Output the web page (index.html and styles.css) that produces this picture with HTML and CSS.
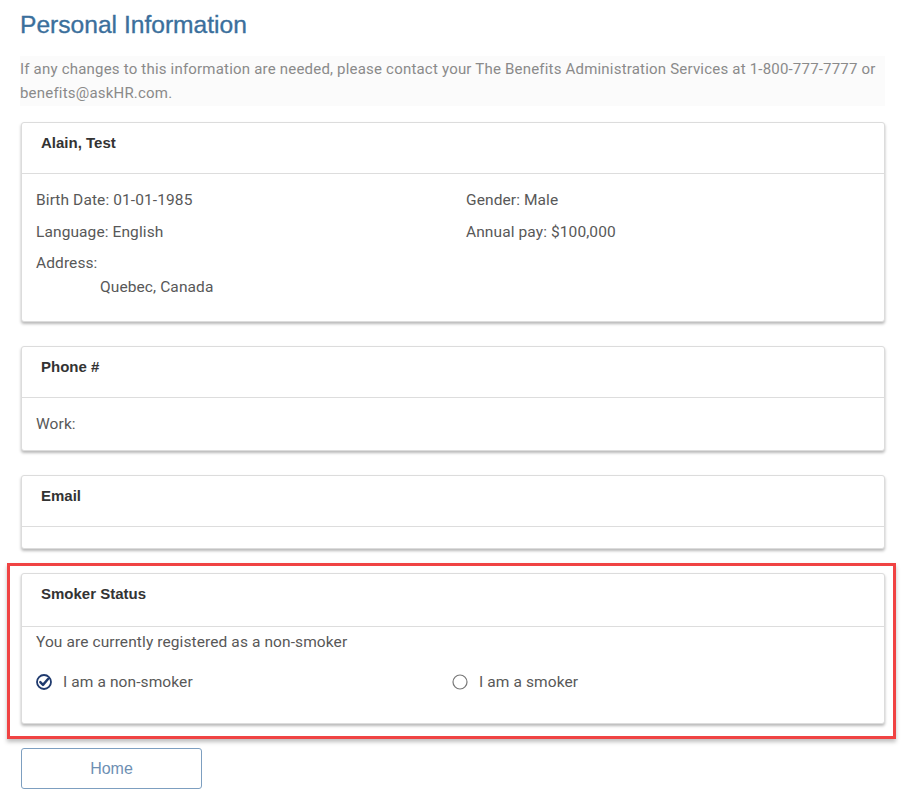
FILE: index.html
```html
<!DOCTYPE html>
<html lang="en">
<head>
<meta charset="utf-8">
<title>Personal Information</title>
<link rel="stylesheet" href="styles.css">
</head>
<body>
<main class="page">
  <h1 class="title">Personal Information</h1>
  <p class="intro">If any changes to this information are needed, please contact your The Benefits Administration Services at 1-800-777-7777 or benefits@askHR.com.</p>

  <section class="card">
    <div class="card-head">Alain, Test</div>
    <div class="card-body info-grid">
      <div class="col">
        <div class="row">Birth Date: 01-01-1985</div>
        <div class="row">Language: English</div>
        <div class="address">
          <div>Address:</div>
          <div class="addr-val">Quebec, Canada</div>
        </div>
      </div>
      <div class="col">
        <div class="row">Gender: Male</div>
        <div class="row">Annual pay: $100,000</div>
      </div>
    </div>
  </section>

  <section class="card">
    <div class="card-head">Phone #</div>
    <div class="card-body phone-body">
      <div class="row-single">Work:</div>
    </div>
  </section>

  <section class="card">
    <div class="card-head">Email</div>
    <div class="card-body empty-body"></div>
  </section>

  <div class="highlight">
    <section class="card card-last">
      <div class="card-head head-tall">Smoker Status</div>
      <div class="card-body smoker-body">
        <div class="row-single">You are currently registered as a non-smoker</div>
        <div class="radio-grid">
          <label class="radio">
            <svg class="radio-icon" viewBox="0 0 16 16" width="16" height="16" aria-hidden="true">
              <circle cx="8" cy="8" r="7" fill="none" stroke="#1f3a6e" stroke-width="1.8"/>
              <path d="M4.3 8.1 L7 10.9 L12 5" fill="none" stroke="#1f3a6e" stroke-width="2.4" stroke-linecap="round" stroke-linejoin="round"/>
            </svg>
            <span>I am a non-smoker</span>
          </label>
          <label class="radio">
            <svg class="radio-icon" viewBox="0 0 16 16" width="16" height="16" aria-hidden="true">
              <circle cx="8" cy="8" r="7" fill="none" stroke="#777" stroke-width="1.2"/>
            </svg>
            <span>I am a smoker</span>
          </label>
        </div>
      </div>
    </section>
  </div>

  <button class="home-btn" type="button">Home</button>
</main>
</body>
</html>
```

FILE: styles.css
```css
* { box-sizing: border-box; }

html, body {
  margin: 0;
  padding: 0;
  background: #ffffff;
}

body {
  font-family: Roboto, "Liberation Sans", Arial, sans-serif;
  color: #555;
}

.page {
  width: 865px;
  margin-left: 20px;
  padding-top: 10px;
}

.title {
  margin: 0;
  font-family: "Liberation Sans", Arial, sans-serif;
  font-weight: normal;
  font-size: 24.6px;
  line-height: 30px;
  color: #3b6f9c;
  -webkit-text-stroke: 0.35px #3b6f9c;
}

.intro {
  margin: 16px 0 16px 0;
  padding: 1px 0 1px 0;
  background: #fbfbfb;
  font-size: 15px;
  letter-spacing: 0.2px;
  line-height: 24px;
  color: #8a8a8a;
}

.card {
  margin-left: 1px;
  width: 864px;
  background: #fff;
  border: 1px solid #dcdcdc;
  border-radius: 3px;
  box-shadow: 0 2px 3px rgba(0, 0, 0, 0.28);
  margin-bottom: 24px;
}

.card-head {
  height: 51px;
  padding: 10px 19px 0 19px;
  font-family: "Liberation Sans", Arial, sans-serif;
  font-weight: bold;
  font-size: 15px;
  line-height: 20px;
  color: #333;
  border-bottom: 1px solid #dddddd;
}

.card-body {
  padding: 0 14px;
  font-size: 15.5px;
  letter-spacing: 0.1px;
  color: #585858;
}

.info-grid {
  display: grid;
  grid-template-columns: 430px 1fr;
  padding-top: 16px;
  padding-bottom: 22px;
}

.row {
  line-height: 20px;
  margin-bottom: 12px;
}

.address {
  line-height: 24px;
  margin-top: -3px;
}

.addr-val {
  padding-left: 64px;
}

.row-single {
  line-height: 20px;
}

.phone-body {
  padding-top: 16px;
  padding-bottom: 16px;
}

.empty-body {
  height: 21px;
}

.highlight {
  width: 889px;
  margin-left: -13px;
  margin-top: -10px;
  border: 3px solid #f04343;
  padding: 7px 8px 12px 11px;
  box-shadow: 0 3px 4px rgba(0, 0, 0, 0.25);
}

.card-last {
  margin: 0;
}

.head-tall {
  height: 53px;
}

.smoker-body {
  padding-top: 5px;
  padding-bottom: 31px;
}

.radio-grid {
  display: grid;
  grid-template-columns: 416px 1fr;
  margin-top: 20px;
}

.radio {
  display: flex;
  align-items: center;
  gap: 11px;
  line-height: 20px;
}

.radio-icon {
  flex: 0 0 16px;
  display: block;
}

.home-btn {
  display: block;
  margin: 9px 0 0 1px;
  width: 181px;
  height: 41px;
  background: #fff;
  border: 1px solid #7d9fc0;
  border-radius: 3px;
  font-family: "Liberation Sans", Arial, sans-serif;
  font-size: 16px;
  color: #6e8fb3;
  cursor: pointer;
}
```
